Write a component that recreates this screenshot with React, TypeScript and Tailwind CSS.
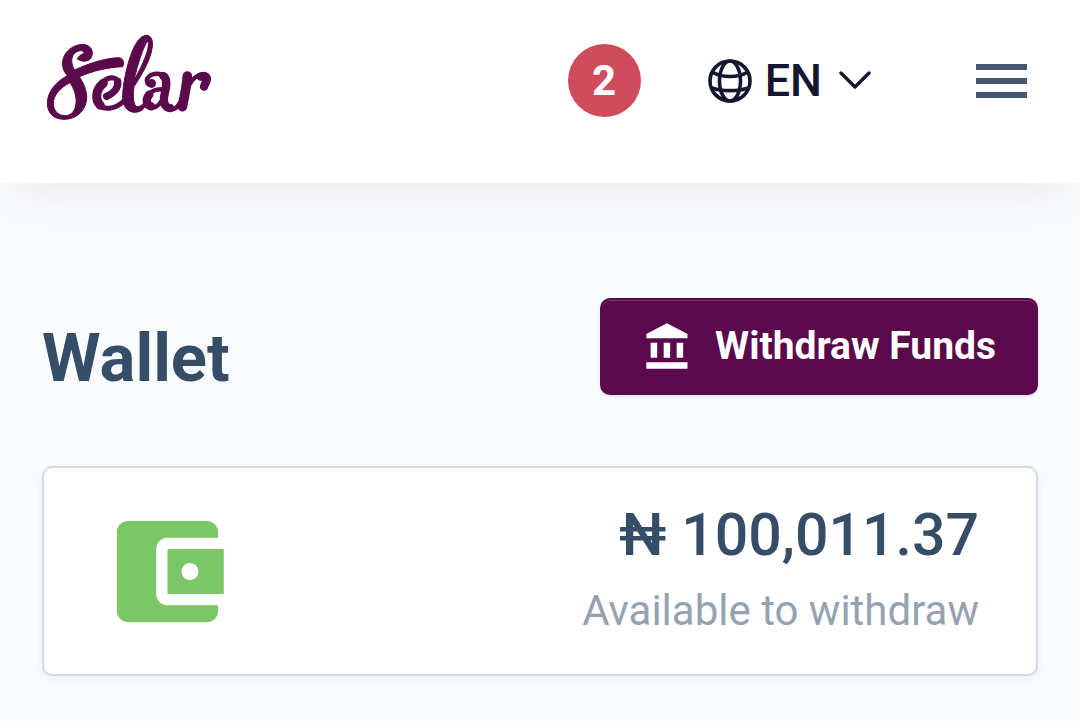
import { MdAccountBalanceWallet } from "react-icons/md";

function Logo() {
  return (
    <svg viewBox="45 39 504 264" className="h-[88px] w-[168px] text-[#5a094b]" fill="none" stroke="currentColor" strokeLinecap="round" strokeLinejoin="round" role="img" aria-label="Selar">
      <g fill="currentColor" fillRule="evenodd" strokeWidth="3">
        <path d="M143 117C155 128 186 128 187 100C187 78 165 70 148 74C118 80 94 105 98 138C100 152 106 160 112 167C82 183 52 212 52 250C52 280 72 298 102 298C142 298 172 268 170 228C168 200 155 182 148 170C190 152 235 142 278 140C284 128 280 114 266 113C230 114 180 128 134 150C122 132 122 108 136 98C146 90 160 90 162 98C158 104 146 104 143 117ZM120 188C132 205 140 228 138 250C136 274 122 287 106 287C84 287 70 272 70 250C70 225 92 202 120 188Z" />
        <path d="M350 46C366 46 370 66 366 86C360 124 334 166 312 200C308 230 310 254 320 260C334 260 342 250 350 236L356 246C344 268 330 277 314 277C290 276 276 256 278 224C280 180 296 110 316 74C326 58 336 46 350 46ZM352 64C340 80 324 130 312 180C330 150 352 104 355 78C356 70 355 64 352 64Z" />
        <circle cx="365" cy="190" r="13" stroke="none" />
      </g>
      <path strokeWidth="15" d="M264 186C258 168 236 170 220 184C196 206 192 240 208 256C226 272 262 266 286 238" />
      <path strokeWidth="22" d="M263 184C266 204 250 220 230 229" />
      <path strokeWidth="27" d="M220 190C198 208 193 238 211 256" />
      <path strokeWidth="13" d="M366 196C350 196 346 180 356 170C366 160 382 160 398 163M398 208C372 206 348 220 346 242C346 256 354 264 366 264C382 262 394 248 400 232" />
      <path strokeWidth="25" d="M400 168C416 178 406 210 402 232C400 250 406 264 420 264M358 224C347 236 347 254 363 259" />
      <path strokeWidth="13" d="M420 270C440 270 450 252 458 232M466 224C476 190 494 168 514 164" />
      <path strokeWidth="29" d="M472 168C470 200 463 232 457 260" />
      <path strokeWidth="25" d="M512 170C526 164 534 172 529 184C526 190 524 194 522 200" />
    </svg>
  );
}

function BankIcon() {
  return (
    <svg viewBox="0 0 24 24" className="size-[52px]" fill="currentColor" aria-hidden="true">
      <path d="M4 10v7h3v-7H4zm6 0v7h3v-7h-3zM2 22h19v-3H2v3zm14-12v7h3v-7h-3zm-4.500-9L2 6v2h19V6l-9.500-5z" />
    </svg>
  );
}

export default function App() {
  return (
    <div className="min-h-screen bg-[#fafbff] font-['Roboto',sans-serif] text-[#364d68]">
      <header className="flex h-[183px] items-start bg-white pr-[53px] pl-[45px] shadow-[0_24px_40px_-14px_rgba(40,35,0,0.07)]">
        <a href="#home" className="mt-[33px]"><Logo /></a>
        <div className="mt-11 ml-auto flex items-center">
          <span className="flex size-[73px] items-center justify-center rounded-full bg-[#cf4c5d] text-[42px] leading-none font-bold text-white">2</span>
          <button type="button" className="ml-[67px] flex items-center text-[45px] leading-none font-medium text-[#14172f]">
            <svg viewBox="0 0 44 44" className="size-11" fill="none" stroke="currentColor" strokeWidth="3.6" aria-hidden="true">
              <circle cx="22" cy="22" r="20" />
              <ellipse cx="22" cy="22" rx="10.500" ry="20" />
              <path d="M4 13C14 19 30 19 40 13M3.500 29C14 32.500 30 32.500 40.500 29" />
            </svg>
            <span className="ml-[13px]">EN</span>
            <svg viewBox="0 0 34 20" className="ml-4 h-5 w-[34px]" fill="none" stroke="currentColor" strokeWidth="3.4" strokeLinecap="round" strokeLinejoin="round" aria-hidden="true">
              <path d="M3 2L17 16L31 2" />
            </svg>
          </button>
          <button type="button" aria-label="Menu" className="ml-[104px] flex w-[51px] flex-col gap-2">
            <span className="h-[6px] bg-[#46586f]" />
            <span className="h-[6px] bg-[#46586f]" />
            <span className="h-[6px] bg-[#46586f]" />
          </button>
        </div>
      </header>
      <main className="px-[42px] pt-[115px] pb-11">
        <div className="flex items-start justify-between">
          <h1 className="mt-[27px] text-[67px] leading-none font-bold">Wallet</h1>
          <button type="button" className="flex h-[97px] items-center gap-[21px] rounded-[10px] border-2 border-[#5a094b] bg-[#5a094b] px-10 text-[39px] font-bold text-white shadow-[inset_0_1px_0_rgba(255,255,255,0.2),0_2px_3px_rgba(50,50,93,0.1)]">
            <BankIcon />
            Withdraw Funds
          </button>
        </div>
        <section className="mt-[71px] flex h-[210px] items-center justify-between rounded-[10px] border-2 border-[#d4dbe5] bg-white pr-[57px] pl-14 shadow-[0_3px_6px_rgba(50,50,93,0.06)]">
          <MdAccountBalanceWallet className="size-[135px] text-[#7dc668]" aria-hidden="true" />
          <div className="text-right">
            <p className="text-[59px] leading-[80px] font-medium">₦ 100,011.37</p>
            <p className="text-[42px] leading-[72px] text-[#95a2b1]">Available to withdraw</p>
          </div>
        </section>
      </main>
    </div>
  );
}
